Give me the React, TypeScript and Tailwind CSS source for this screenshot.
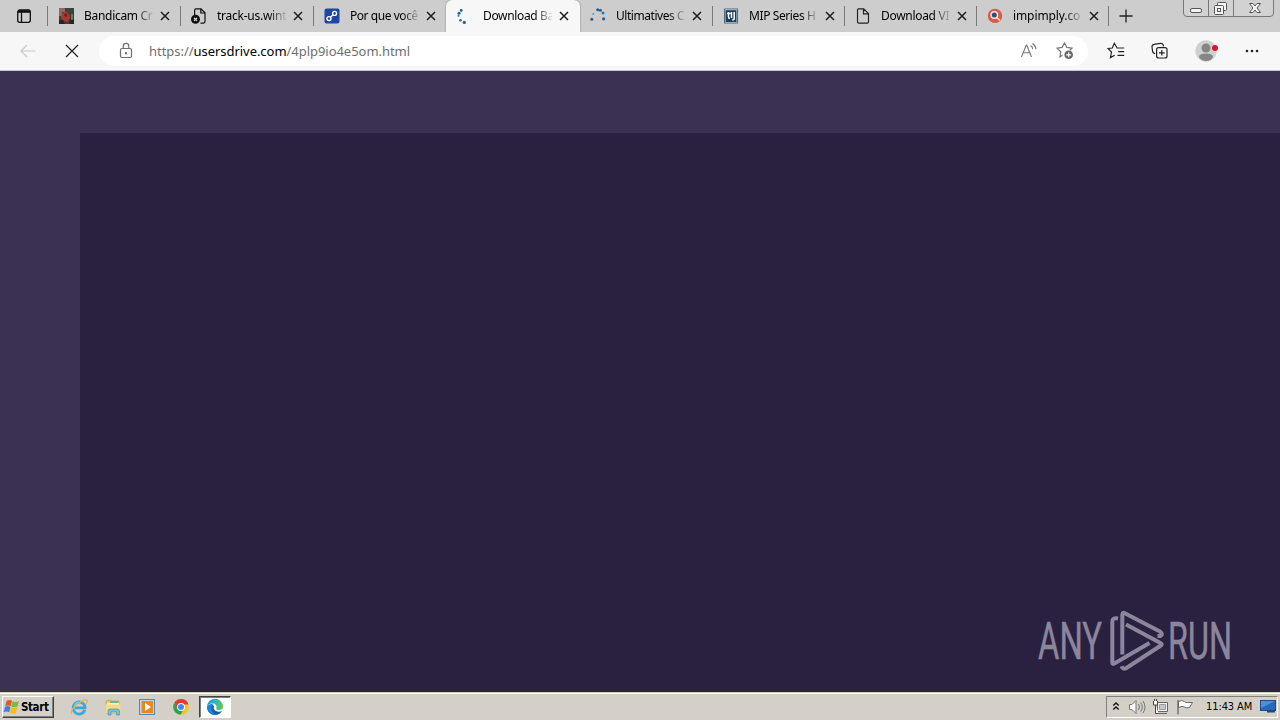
import type { ReactNode } from "react";

type Tab = {
  title: string;
  icon: ReactNode;
  active?: boolean;
  divider?: boolean;
  width: string;
  tracking: string;
};

function BandicamIcon() {
  return (
    <svg width="16" height="16" viewBox="0 0 16 16">
      <rect x="1" y="0" width="15" height="16" fill="#4a3b35" />
      <path d="M1 0h6v4H4v4H1z" fill="#8b6a60" />
      <path d="M9 0h6v5l-3 1-3-2z" fill="#31483a" />
      <path d="M4 6l3-3 3 2 2 4-2 5-4-1-3-3z" fill="#a83a35" />
      <path d="M7 5l2 1v3L6 8z" fill="#6d1e1e" />
      <path d="M1 12h4l2 4H1zM12 11h4v5h-5z" fill="#2a2422" />
      <path d="M13 6h2v6h-2z" fill="#5b7b62" />
    </svg>
  );
}

function BlockedPageIcon() {
  return (
    <svg width="16" height="16" viewBox="0 0 16 16" fill="none">
      <path d="M3.6 7V2.2A1.5 1.5 0 0 1 5 .8h5l4 4v8.8a1.5 1.5 0 0 1-1.4 1.5H9.5M9.8 1v4H14" stroke="#111" strokeWidth="1.2" />
      <circle cx="4.5" cy="11.3" r="4.5" fill="#111" />
      <path d="M3 9.8l3 3M6 9.8l-3 3" stroke="#e8e8e8" strokeWidth="1.2" />
    </svg>
  );
}

function LinkIcon() {
  return (
    <svg width="16" height="16" viewBox="0 0 16 16" fill="none">
      <rect x=".5" y=".5" width="15" height="15" rx="2" fill="#1c46a0" />
      <g stroke="#fff" strokeWidth="1.4">
        <circle cx="10.6" cy="5.4" r="2" />
        <circle cx="5" cy="10.6" r="2" />
        <path d="M6.4 9.2l2.800-2.500" />
      </g>
    </svg>
  );
}

function SpinnerIcon() {
  return (
    <svg width="16" height="16" viewBox="0 0 16 16" fill="#235f91">
      <circle cx="4.2" cy="2.5" r="1.4" />
      <circle cx="2" cy="5.2" r="1.5" />
      <circle cx="1.5" cy="7.8" r="1.1" fill="#4a83ad" />
      <circle cx="3.5" cy="12.3" r="1.4" fill="#3474a5" />
      <circle cx="7.3" cy="14.4" r="1.6" />
    </svg>
  );
}

function SpinnerAltIcon() {
  return (
    <svg width="16" height="16" viewBox="0 0 16 16" fill="#235f91">
      <circle cx="1.8" cy="11.3" r="1.5" />
      <circle cx="3.2" cy="6" r="1.1" fill="#6b99b9" />
      <circle cx="7.7" cy="1.8" r="1.5" />
      <circle cx="10.4" cy="2.2" r="1.5" />
      <circle cx="13" cy="5" r="1.5" fill="#3474a5" />
      <circle cx="13.6" cy="10.8" r="1.6" />
    </svg>
  );
}

function SeriesIcon() {
  return (
    <svg width="16" height="16" viewBox="0 0 16 16" fill="none">
      <rect x="1.5" y="1" width="13" height="14" fill="#e9eef2" stroke="#52697b" />
      <rect x="2.5" y="2.2" width="11" height="11.8" fill="#173c5c" />
      <path d="M5.5 4v5q0 1.500 1.500 1.500M4 5.500h3.500M8.500 4v6M11.200 5v5.500q0 1.500-2 1.500M11.200 4v1" stroke="#fff" strokeWidth="1.5" />
    </svg>
  );
}

function PageIcon() {
  return (
    <svg width="16" height="16" viewBox="0 0 16 16" fill="none" stroke="#222" strokeWidth="1.15">
      <path d="M3.5.8h5.2l4.8 4.8v8.2q0 1.3-1.3 1.3H3.8q-1.3 0-1.3-1.3V2Q2.5.8 3.5.8zM8.5.8v5h5" />
    </svg>
  );
}

function SearchBadgeIcon() {
  return (
    <svg width="16" height="16" viewBox="0 0 16 16" fill="none">
      <circle cx="8" cy="7.9" r="7.2" fill="#dc5a48" />
      <circle cx="7.3" cy="6.9" r="4" fill="#f6e3e0" />
      <circle cx="7.3" cy="6.9" r="2.5" fill="#2c4e7c" />
      <path d="M10 9.7l3 2.8" stroke="#f6e3e0" strokeWidth="1.5" />
    </svg>
  );
}

const tabs: Tab[] = [
  { title: "Bandicam Cr", icon: <BandicamIcon />, divider: true, width: "w-[133px]", tracking: "tracking-[-0.3px]" },
  { title: "track-us.wint", icon: <BlockedPageIcon />, divider: true, width: "w-[133px]", tracking: "tracking-[-0.25px]" },
  { title: "Por que você", icon: <LinkIcon />, width: "w-[132px]", tracking: "tracking-[-0.45px]" },
  { title: "Download Ba", icon: <SpinnerIcon />, active: true, width: "w-[134px]", tracking: "tracking-[-0.35px]" },
  { title: "Ultimatives C", icon: <SpinnerAltIcon />, divider: true, width: "w-[133px]", tracking: "tracking-[-0.45px]" },
  { title: "MIP Series H", icon: <SeriesIcon />, divider: true, width: "w-[132px]", tracking: "tracking-[-0.4px]" },
  { title: "Download VI", icon: <PageIcon />, divider: true, width: "w-[132px]", tracking: "tracking-[-0.3px]" },
  { title: "impimply.co", icon: <SearchBadgeIcon />, divider: true, width: "w-[132px]", tracking: "tracking-[-0.1px]" },
];

function TabItem({ tab }: { tab: Tab }) {
  return (
    <div
      className={`flex h-8 shrink-0 items-center ${tab.width} ${
        tab.active
          ? "rounded-t-md bg-[#f7f7f7] pl-[11px] shadow-[0_0_2px_rgba(0,0,0,0.45)]"
          : "pl-2.5"
      }`}
    >
      <span className="h-4 w-4 shrink-0">{tab.icon}</span>
      <span
        className={`ml-[10px] w-[69px] shrink-0 bg-gradient-to-r from-black from-75% to-black/10 bg-clip-text text-[12px] leading-[18px] whitespace-nowrap text-transparent ${tab.tracking}`}
      >
        {tab.title}
      </span>
      <svg className="ml-[7px] shrink-0" width="10" height="10" viewBox="0 0 10 10" stroke="#1c1c1c" strokeWidth="1.5">
        <path d="M1 1l8 8M9 1l-8 8" />
      </svg>
      {tab.divider && <span className="ml-auto h-5 w-px bg-[#797979]" />}
    </div>
  );
}

function WindowControls() {
  return (
    <svg className="absolute top-0 right-1" width="94" height="18" viewBox="0 0 94 18" fill="none" stroke="#777">
      <path d="M1.5 0v13q0 3.5 3.5 3.5H88q3.500 0 3.500-3.500V0" fill="#d2d2d2" />
      <path d="M26.5 0v16M51.5 0v16" />
      <rect x="8.5" y="8.5" width="11" height="4" rx="1.5" fill="#f4f4f4" stroke="#555" />
      <g stroke="#555" fill="#f4f4f4">
        <rect x="35.5" y="2.5" width="9" height="8" rx="1" />
        <rect x="32.5" y="5.5" width="9" height="9" rx="1" />
        <rect x="35.5" y="8.5" width="3" height="3" />
      </g>
      <path d="M67.5 3.5H71l2 2.500 2-2.500h3.500L75 8l3.500 4.500H75L73 10l-2 2.500h-3.500L71 8z" fill="#f4f4f4" stroke="#555" />
    </svg>
  );
}

function TabStrip() {
  return (
    <div className="relative flex h-8 items-center overflow-hidden bg-[#cdcdcd]">
      <div className="flex w-12 shrink-0 items-center pl-4">
        <svg width="16" height="16" viewBox="0 0 16 16" fill="none" stroke="#111" strokeWidth="1.3">
          <rect x="1.7" y="2" width="12.6" height="12.3" rx="2" />
          <path d="M2 3.5h12" strokeWidth="2.6" />
          <path d="M5.5 4v10" />
        </svg>
        <span className="ml-auto h-5 w-px bg-[#797979]" />
      </div>
      {tabs.map((tab) => (
        <TabItem key={tab.title} tab={tab} />
      ))}
      <svg className="ml-[10px]" width="14" height="14" viewBox="0 0 14 14" stroke="#222" strokeWidth="1.3">
        <path d="M7 .5v13M.5 7h13" />
      </svg>
      <WindowControls />
    </div>
  );
}

function AddressBar() {
  return (
    <div className="flex h-[30px] w-[989px] shrink-0 items-center rounded-full bg-white">
      <svg className="ml-[19px] shrink-0" width="16" height="18" viewBox="0 0 16 18" fill="none" stroke="#707070" strokeWidth="1.2">
        <rect x="2.5" y="6.5" width="11" height="9" rx="1.5" />
        <path d="M5.2 6.5V4.2a2.8 2.8 0 0 1 5.6 0v2.3" />
        <circle cx="8" cy="11.3" r=".6" fill="#707070" />
      </svg>
      <div className="ml-[15px] text-[13px] leading-5 tracking-[-0.04px] whitespace-nowrap text-[#6f6f6f]">
        https://<span className="text-black">usersdrive.com</span>/4plp9io4e5om.html
      </div>
      <svg className="mr-[10px] ml-auto shrink-0" width="18" height="18" viewBox="0 0 18 18" fill="none" stroke="#777" strokeWidth="1.1">
        <path d="M1.5 15L6.3 3h.4l4.8 12M3.3 10.7h6.5" />
        <path d="M10.5 3.5q2 1 2.3 3.7M12.5 1.5q3 1.8 3.5 5.7" />
      </svg>
      <svg className="mr-[14px] ml-2 shrink-0" width="18" height="18" viewBox="0 0 18 18" fill="none" stroke="#777" strokeWidth="1.2">
        <path d="M6.5 13.2L4 14.7l.8-5L1 6.2l5.200-.8L8.500 1l2.300 4.400 5.200.8-2.200 2" />
        <circle cx="12.7" cy="12.8" r="4.3" fill="#666" stroke="none" />
        <path d="M12.7 10.3v5M10.2 12.8h5" stroke="#fff" />
      </svg>
    </div>
  );
}

function Toolbar() {
  return (
    <div className="flex h-[39px] items-center border-b border-[#c5c5d5] bg-[#f7f7f7]">
      <svg className="ml-5 shrink-0" width="16" height="14" viewBox="0 0 16 14" fill="none" stroke="#cacaca" strokeWidth="1.2">
        <path d="M15.5 7H1M7 1L1 7l6 6" />
      </svg>
      <svg className="ml-[29px] shrink-0" width="14" height="14" viewBox="0 0 14 14" stroke="#222" strokeWidth="1.2">
        <path d="M1 1l12 12M13 1L1 13" />
      </svg>
      <div className="ml-5 flex">
        <AddressBar />
      </div>
      <svg className="ml-[19px] shrink-0" width="18" height="18" viewBox="0 0 18 18" fill="none" stroke="#222" strokeWidth="1.2">
        <path d="M10 5.5h-.2L7.3 1.3 5.3 6 1 6.5 4.500 10l-1 5.500 4.200-2.300M9.500 6h7.700M11.200 9.700h6M10.500 13.300h6.700" />
      </svg>
      <svg className="ml-[26px] shrink-0" width="18" height="18" viewBox="0 0 18 18" fill="none" stroke="#222" strokeWidth="1.2">
        <path d="M4.2 11.7Q2 11.3 1.6 9.5L1 5Q.8 2.8 3 2.3l6.500-1q2-.2 2.700 1.500l.3 1.500" />
        <rect x="5.6" y="5.6" width="10.4" height="10.4" rx="2" />
        <path d="M10.8 8v5.6M8 10.8h5.6" />
      </svg>
      <svg className="ml-[26px] shrink-0" width="24" height="22" viewBox="0 0 24 22">
        <circle cx="11" cy="11" r="10.7" fill="#cfd1d0" />
        <circle cx="11" cy="8" r="4.5" fill="#858585" />
        <path d="M4 17q0-3.500 7-3.500t7 3.500q-2 4-7 4t-7-4z" fill="#858585" />
        <circle cx="20" cy="8" r="3" fill="#e01523" />
      </svg>
      <svg className="ml-[26px] shrink-0" width="14" height="4" viewBox="0 0 14 4" fill="#222">
        <circle cx="2" cy="2" r="1.3" />
        <circle cx="7" cy="2" r="1.3" />
        <circle cx="12" cy="2" r="1.3" />
      </svg>
    </div>
  );
}

function Watermark() {
  return (
    <svg className="absolute right-[46px] bottom-[20px]" width="196" height="64" viewBox="0 0 196 64" fill="none">
      <g fill="#8c869d" stroke="#8c869d" strokeWidth=".5" fontFamily="Roboto, sans-serif" fontSize="52">
        <text x="0" y="51" textLength="64" lengthAdjust="spacingAndGlyphs">ANY</text>
        <text x="130" y="51" textLength="64" lengthAdjust="spacingAndGlyphs">RUN</text>
      </g>
      <g stroke="#8c869d" strokeWidth="4" strokeLinejoin="round">
        <path d="M84.3 46.5V7q0-3 2.500-1.800L122 23.500q3.500 3 .5 4.500h-3" />
        <path d="M80 10.5q-5.700-1-5.700 3V55q0 1.500 2 .5L111.500 35" />
        <path d="M88 16.5l34.500 18.500q2.500 1.300 0 2.800L88 60.200q-3 1.500-4.500-2" />
      </g>
    </svg>
  );
}

function WebPage() {
  return (
    <main className="relative h-[621px] bg-[#3b3152] pt-[62px] pl-20">
      <div className="h-full bg-[#2a2140]" />
      <Watermark />
    </main>
  );
}

function WindowsFlag() {
  return (
    <svg className="shrink-0" width="18" height="16" viewBox="0 0 18 16">
      <path d="M3.5 2q3-2 5.500-.2L7.700 7.200q-2.500-1.600-5.500 0z" fill="#e8572a" />
      <path d="M9.5 2.2q3 1.600 6.500-.2l-1.400 5.500q-3 1.700-6.300-.1z" fill="#7fb93c" />
      <path d="M2 8q3-1.800 5.500-.1l-1.300 5.300q-2.600-1.600-5.500.1z" fill="#3b83d0" />
      <path d="M8.1 8.2q3 1.700 6.300.1L13 13.800q-3 1.500-6.200-.2z" fill="#f5bd24" />
    </svg>
  );
}

function ExplorerIcon() {
  return (
    <svg width="18" height="18" viewBox="0 0 18 18" fill="none">
      <path d="M14.8 12A6 6 0 1 1 15 8.800v1H5" stroke="#3ba8e2" strokeWidth="2.8" />
      <path d="M4.5 8.5Q5.5 4 9 4" stroke="#a3e0f7" />
      <path d="M2 16Q-.5 13 6.500 7T17 2q1 1.500-1 4" stroke="#e5b545" strokeWidth="1.3" />
    </svg>
  );
}

function FolderIcon() {
  return (
    <svg width="18" height="18" viewBox="0 0 18 18">
      <path d="M2 3l4-1 2 1h7v12H2z" fill="#eacb69" stroke="#b8963f" strokeWidth=".6" />
      <path d="M3 5h12v6H3z" fill="#fff5bd" />
      <path d="M6 3h8v2H6z" fill="#70b79a" />
      <path d="M1.5 6.5h15V15h-15z" fill="#f3dc82" />
      <path d="M4 17v-4q0-2 2-2h7.500q2 0 2 2v4h-3v-3H7v3z" fill="#79bedf" stroke="#438caf" strokeWidth=".6" />
    </svg>
  );
}

function MediaIcon() {
  return (
    <svg width="18" height="18" viewBox="0 0 18 18">
      <rect x="1.5" y="1.5" width="15" height="15" fill="#b9d9ef" stroke="#458dbf" />
      <rect x="3.5" y="3" width="11.5" height="12" fill="#ef861b" />
      <path d="M7 5l6 4-6 4z" fill="#fff" />
    </svg>
  );
}

function ChromeIcon() {
  return (
    <svg width="18" height="18" viewBox="0 0 18 18">
      <circle cx="9" cy="9" r="7.8" fill="#f6c51c" />
      <path d="M2.25 5.1A7.8 7.8 0 0 1 16.5 6.5H9L5.500 11z" fill="#df3d30" />
      <path d="M2.25 5.1A7.8 7.8 0 0 0 8.500 16.800L12 11H6z" fill="#2ca151" />
      <circle cx="9" cy="9" r="3.9" fill="#fff" />
      <circle cx="9" cy="9" r="3" fill="#4386ee" />
    </svg>
  );
}

function EdgeIcon() {
  return (
    <svg width="18" height="18" viewBox="0 0 18 18">
      <defs>
        <linearGradient id="edge-wave" x1="0" y1="0" x2="1" y2="0.3">
          <stop offset="0" stopColor="#1e8fd5" />
          <stop offset=".5" stopColor="#2cb4c4" />
          <stop offset="1" stopColor="#5cc35a" />
        </linearGradient>
      </defs>
      <path d="M1 8.5Q1 16 8.500 17q5 .3 7.500-4-3 1.500-6 0T8 8Q5 5 1 8.500z" fill="#175fae" />
      <path d="M1 9A8 8 0 0 1 17 8.500Q17 12 13 12q-3.500 0-2.500-2Q11 5.500 6.500 5.500T1 9z" fill="url(#edge-wave)" />
      <path d="M1 9q2-4 6.500-2.500Q4.500 9 6 13t5 3.800Q2 18 1 9z" fill="#1b86d3" />
    </svg>
  );
}

function SystemTray() {
  return (
    <div className="mr-0.5 ml-auto flex h-[22px] w-[172px] items-center border border-t-[#808080] border-r-white border-b-white border-l-[#808080]">
      <svg className="ml-[5px] shrink-0" width="8" height="12" viewBox="0 0 8 12" fill="none" stroke="#111" strokeWidth="1.3">
        <path d="M1.3 4.5L4 2l2.700 2.500M1.300 8.500L4 6l2.700 2.500" />
      </svg>
      <svg className="ml-[8px] shrink-0" width="18" height="16" viewBox="0 0 18 16" fill="none" stroke="#777">
        <path d="M1.5 5.5H4l4-4v13l-4-4H1.500z" fill="#fff" />
        <path d="M10.5 5q2 3 0 6M12.700 3.500q3.200 4.500 0 9M15 2q4 6 0 12" />
      </svg>
      <svg className="ml-[6px] shrink-0" width="17" height="16" viewBox="0 0 17 16" fill="none" stroke="#666">
        <path d="M5.5 3.5h10v9h-10z" fill="#f4f4f4" />
        <path d="M7.5 5.5h6v5h-6z" fill="#c8c8c8" stroke="#999" />
        <path d="M6 14.5h9" />
        <path d="M1.5 2v4h4V2M2.500 0v2M4.500 0v2M3.500 6v8.500h3" stroke="#444" fill="#fff" />
      </svg>
      <svg className="ml-[7px] shrink-0" width="17" height="16" viewBox="0 0 17 16" stroke="#666">
        <path d="M2.5 2.5q3-2 6 0 1 1.500 3 1h5l-3 5q-3 1-5-.5t-6 .5z" fill="#fff" />
        <path d="M2 1v14.5" strokeWidth="1.3" />
      </svg>
      <span className="ml-[13px] w-[49px] shrink-0 pt-0.5 font-['DejaVu_Sans_Condensed','DejaVu_Sans',sans-serif] text-[11px] tracking-[-0.1px] whitespace-nowrap">
        11:43 AM
      </span>
      <svg className="ml-[5px] shrink-0" width="16" height="15" viewBox="0 0 16 15">
        <rect x=".5" y="1.5" width="15" height="10" fill="#246bc0" stroke="#244b80" />
        <path d="M1 2h14L1 9z" fill="#4b91dc" />
        <path d="M7 11.5h8v2H7z" fill="#32465d" />
      </svg>
    </div>
  );
}

function Taskbar() {
  return (
    <footer className="flex h-7 items-center border-t border-[#d4d0c8] bg-[#d4d0c8] shadow-[inset_0_1px_0_#fff]">
      <button className="ml-0.5 flex h-[22px] w-[52px] shrink-0 items-center border border-t-white border-r-[#404040] border-b-[#404040] border-l-white bg-[#d4d0c8] shadow-[inset_-1px_-1px_0_#808080]">
        <WindowsFlag />
        <span className="pt-0.5 font-['DejaVu_Sans_Condensed','DejaVu_Sans',sans-serif] text-[11.5px] font-bold tracking-[-0.4px]">
          Start
        </span>
      </button>
      <div className="ml-4 flex items-center gap-4">
        <ExplorerIcon />
        <FolderIcon />
        <MediaIcon />
        <ChromeIcon />
      </div>
      <div className="ml-[9px] flex h-[22px] w-8 items-center justify-center border border-t-[#404040] border-r-white border-b-white border-l-[#404040] bg-white shadow-[inset_1px_1px_0_#808080]">
        <EdgeIcon />
      </div>
      <SystemTray />
    </footer>
  );
}

export default function App() {
  return (
    <div className="h-[720px] w-[1280px] overflow-hidden font-['Noto_Sans',sans-serif] text-black">
      <TabStrip />
      <Toolbar />
      <WebPage />
      <Taskbar />
    </div>
  );
}
